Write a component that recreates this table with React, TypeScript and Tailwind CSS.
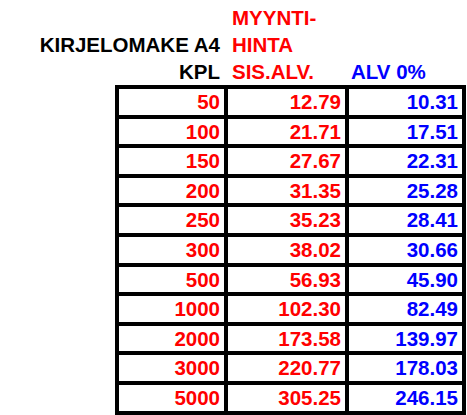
import { Fragment } from "react"

const rows = [
  ["50", "12.79", "10.31"],
  ["100", "21.71", "17.51"],
  ["150", "27.67", "22.31"],
  ["200", "31.35", "25.28"],
  ["250", "35.23", "28.41"],
  ["300", "38.02", "30.66"],
  ["500", "56.93", "45.90"],
  ["1000", "102.30", "82.49"],
  ["2000", "173.58", "139.97"],
  ["3000", "220.77", "178.03"],
  ["5000", "305.25", "246.15"],
]

export default function App() {
  return (
    <div className="w-[467px] h-[415px] overflow-hidden bg-white font-['Liberation_Sans',Arial,sans-serif] font-bold text-[20.5px]">
      {/* Header */}
      <div className="pt-[4px] grid grid-cols-[224px_125px_1fr] auto-rows-[27px] leading-[27px] whitespace-nowrap">
        <div />
        <div className="pl-[8px] text-[#ff0000]">MYYNTI-</div>
        <div />

        <div className="pr-[4px] text-right text-black">KIRJELOMAKE A4</div>
        <div className="pl-[8px] text-[#ff0000]">HINTA</div>
        <div />

        <div className="pr-[4px] text-right text-black">KPL</div>
        <div className="pl-[8px] text-[#ff0000]">SIS.ALV.</div>
        <div className="pl-[2px] text-[#0000ff]">ALV 0%</div>
      </div>

      {/* Price table */}
      <div className="ml-[115px] w-[351px] grid grid-cols-[105px_117px_113px] auto-rows-[25.6px] gap-[4px] p-[4px] bg-black leading-[25.6px]">
        {rows.map(([qty, gross, net]) => (
          <Fragment key={qty}>
            <div className="bg-white pr-[4px] text-right text-[#ff0000]">{qty}</div>
            <div className="bg-white pr-[4px] text-right text-[#ff0000]">{gross}</div>
            <div className="bg-white pr-[4px] text-right text-[#0000ff]">{net}</div>
          </Fragment>
        ))}
      </div>
    </div>
  )
}
